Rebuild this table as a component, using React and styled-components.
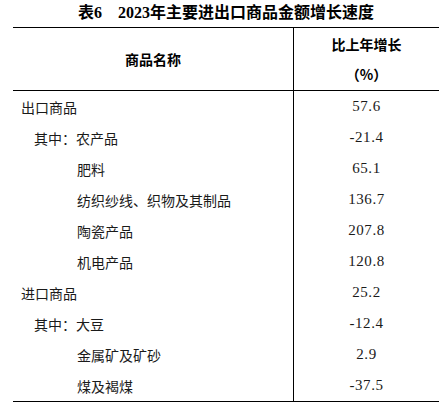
import React from "react";
import styled, { createGlobalStyle } from "styled-components";

const Global = createGlobalStyle`
  html, body { margin: 0; padding: 0; background: #fff; }
  body { font-family: "Noto Sans CJK SC", sans-serif; color: #111; }
`;

const Page = styled.div`
  width: 448px;
  height: 408px;
  padding-left: 13px;
  box-sizing: border-box;
`;

const Title = styled.h1`
  width: 426px;
  margin: 0;
  height: 27px;
  line-height: 26px;
  text-align: center;
  font-family: "Liberation Serif", "Noto Sans CJK SC", serif;
  font-weight: 700;
  font-size: 16px;
  color: #000;
  white-space: pre;
`;

const Table = styled.div`
  width: 426px;
  display: grid;
  grid-template-columns: 281px 145px;
  border-top: 1px solid #000;
  border-bottom: 1px solid #000;
`;

const HeadCell = styled.div`
  height: 62px;
  display: flex;
  flex-direction: column;
  align-items: center;
  justify-content: center;
  font-family: "Noto Sans CJK SC", sans-serif;
  font-weight: 700;
  font-size: 14px;
  line-height: 30px;
  color: #000;
  border-bottom: 1px solid #000;
  ${(p) => (p.$divider ? "border-right: 1px solid #000;" : "")}
`;

const NameCell = styled.div`
  height: 31px;
  display: flex;
  align-items: center;
  padding-left: ${(p) => 8 + p.$indent}px;
  border-right: 1px solid #000;
  font-family: "Noto Sans CJK SC", sans-serif;
  font-size: 14px;
  color: #1a1a1a;
  white-space: pre;
`;

const ValueCell = styled.div`
  height: 31px;
  display: flex;
  align-items: center;
  justify-content: center;
  font-family: "Liberation Serif", serif;
  font-size: 15px;
  letter-spacing: 0.6px;
  color: #1a1a1a;
`;

const rows = [
  { name: "出口商品", indent: 0, value: "57.6" },
  { name: "其中：农产品", indent: 13, value: "-21.4" },
  { name: "肥料", indent: 56, value: "65.1" },
  { name: "纺织纱线、织物及其制品", indent: 56, value: "136.7" },
  { name: "陶瓷产品", indent: 56, value: "207.8" },
  { name: "机电产品", indent: 56, value: "120.8" },
  { name: "进口商品", indent: 0, value: "25.2" },
  { name: "其中：大豆", indent: 13, value: "-12.4" },
  { name: "金属矿及矿砂", indent: 56, value: "2.9" },
  { name: "煤及褐煤", indent: 56, value: "-37.5" },
];

export default function App() {
  return (
    <Page>
      <Global />
      <Title>{"表6　2023年主要进出口商品金额增长速度"}</Title>
      <Table>
        <HeadCell $divider>商品名称</HeadCell>
        <HeadCell>
          <span>比上年增长</span>
          <span>（%）</span>
        </HeadCell>
        {rows.map((r) => (
          <React.Fragment key={r.name}>
            <NameCell $indent={r.indent}>{r.name}</NameCell>
            <ValueCell>{r.value}</ValueCell>
          </React.Fragment>
        ))}
      </Table>
    </Page>
  );
}
